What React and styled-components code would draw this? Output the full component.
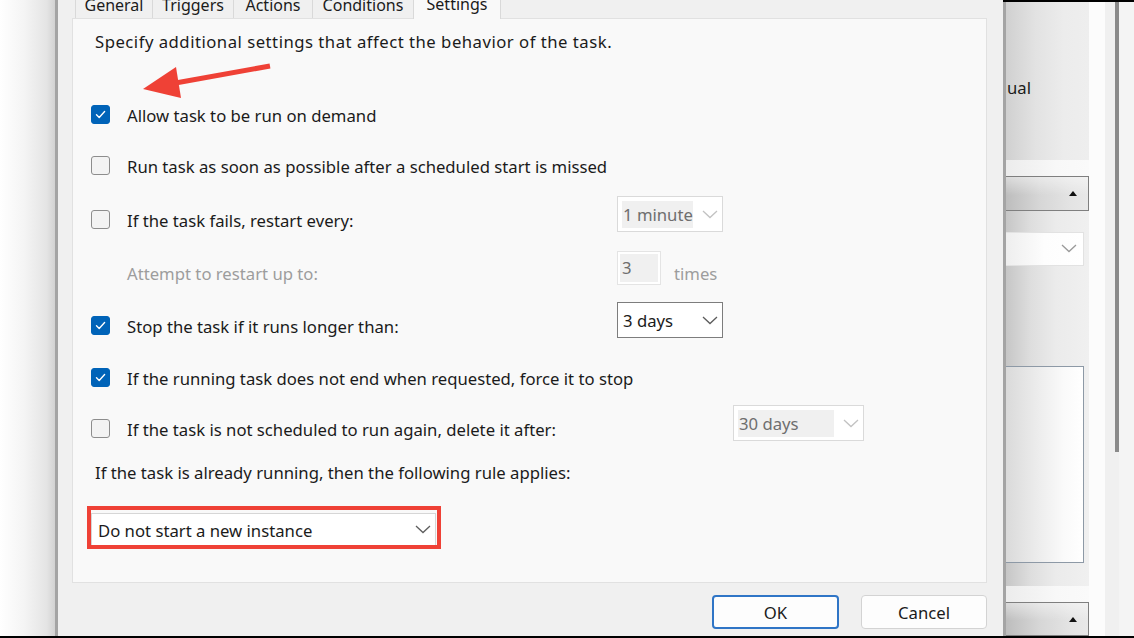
import React from 'react';
import styled, { createGlobalStyle } from 'styled-components';

const Global = createGlobalStyle`
  html, body { margin: 0; padding: 0; background: #000; overflow: hidden; }
  body { font-family: "Noto Sans", "Open Sans", sans-serif; color: #1b1b1b; }
  * { box-sizing: border-box; }
`;

const FS = '16.7px';

const Screen = styled.div`
  position: relative;
  width: 1134px;
  height: 638px;
  display: flex;
  flex-direction: column;
  background: #000;
  overflow: hidden;
`;

const Desk = styled.div`
  display: flex;
  height: 636px;
`;

const LeftShade = styled.div`
  width: 55px;
  background: linear-gradient(to right, #ffffff 0%, #f4f4f4 45%, #e4e4e4 85%, #d2d2d2 100%);
`;

const FrameEdge = styled.div`
  width: 3px;
  background: #a4a4a4;
`;

const Dialog = styled.div`
  width: 945px;
  background: #f0f0f0;
  display: flex;
  flex-direction: column;
  padding: 0 16px 0 14px;
  font-size: 16px;
`;

const TabStrip = styled.div`
  height: 18px;
  display: flex;
  align-items: flex-end;
  padding-left: 3px;
  position: relative;
  z-index: 1;
`;

const Tab = styled.div`
  width: ${p => p.$w}px;
  height: ${p => (p.$active ? 32 : 28)}px;
  margin-right: -1px;
  margin-bottom: ${p => (p.$active ? -1 : 0)}px;
  display: flex;
  align-items: center;
  justify-content: center;
  border: 1px solid #d9d9d9;
  border-bottom: none;
  background: ${p => (p.$active ? '#f9f9f9' : '#f0f0f0')};
  font-size: 16px;
  line-height: 22px;
  color: #1b1b1b;
  white-space: nowrap;
`;

const Panel = styled.div`
  height: 565px;
  border: 1px solid #e1e1e1;
  background: #f9f9f9;
  padding: 12px 20px 0 18px;
  display: flex;
  flex-direction: column;
`;

const Description = styled.div`
  margin-left: 4px;
  line-height: 22px;
  font-size: ${FS};
  letter-spacing: 0.5px;
  white-space: nowrap;
`;

const Row = styled.div`
  display: flex;
  align-items: flex-end;
  margin-top: ${p => p.$mt}px;
`;

const LabelGroup = styled.div`
  display: flex;
  align-items: center;
  height: 22px;
  width: ${p => (p.$w ? `${p.$w}px` : 'auto')};
  padding-left: ${p => p.$indent || 0}px;
  flex-shrink: 0;
`;

const Box = styled.span`
  width: 19px;
  height: 19px;
  margin-right: 17px;
  border-radius: 3px;
  flex-shrink: 0;
  display: flex;
  align-items: center;
  justify-content: center;
  background: ${p => (p.$on ? '#0063b8' : '#f3f3f3')};
  border: 1px solid ${p => (p.$on ? '#0063b8' : '#8d8d8d')};
  margin-top: -3px;
`;

const Label = styled.span`
  font-size: ${FS};
  line-height: 22px;
  white-space: nowrap;
  color: ${p => (p.$muted ? '#9d9d9d' : '#1b1b1b')};
`;

const Select = styled.div`
  width: ${p => p.$w}px;
  height: ${p => p.$h || 36}px;
  border: 1px solid ${p => (p.$disabled ? '#dadada' : '#7d7d7d')};
  background: #fff;
  display: flex;
  align-items: center;
  padding: 0 4px;
  flex-shrink: 0;
`;

const SelectValue = styled.span`
  flex: 1;
  height: 27px;
  line-height: 27px;
  padding-left: 1px;
  font-size: ${FS};
  white-space: nowrap;
  background: ${p => (p.$disabled ? '#f0f0f0' : 'transparent')};
  color: ${p => (p.$disabled ? '#6e6e6e' : '#1b1b1b')};
`;

const ChevronWrap = styled.span`
  width: 16px;
  margin-left: 9px;
  display: flex;
  align-items: center;
`;

const NumberBox = styled.div`
  width: 44px;
  height: 34px;
  border: 1px solid #e4e4e4;
  background: #fff;
  padding: 2px;
  flex-shrink: 0;
`;

const NumberFill = styled.div`
  height: 100%;
  background: #f0f0f0;
  color: #6e6e6e;
  font-size: ${FS};
  line-height: 28px;
  padding-left: 2px;
`;

const Suffix = styled.span`
  margin-left: 13px;
  line-height: 22px;
  font-size: ${FS};
  color: #9d9d9d;
`;

const RuleLabel = styled.div`
  margin-top: 21px;
  margin-left: 4px;
  line-height: 22px;
  font-size: ${FS};
  white-space: nowrap;
`;

const HighlightWrap = styled.div`
  position: relative;
  margin-top: 29px;
  width: 345px;
`;

const Highlight = styled.div`
  position: absolute;
  left: -4px;
  top: -7px;
  right: -5px;
  bottom: -3px;
  border: 4px solid #ef4136;
  pointer-events: none;
`;

const MainSelect = styled.div`
  height: 33px;
  border: 1px solid #d6d6d6;
  background: #fff;
  display: flex;
  align-items: center;
  padding: 0 4px 0 6px;
  font-size: ${FS};
`;

const MainValue = styled.span`
  flex: 1;
  line-height: 22px;
  padding-top: 2px;
`;

const Footer = styled.div`
  display: flex;
  justify-content: flex-end;
  gap: 22px;
  padding-top: 12px;
`;

const Button = styled.button`
  width: ${p => p.$w}px;
  height: 34px;
  border-radius: 4px;
  font-family: inherit;
  font-size: ${FS};
  color: #1b1b1b;
  background: #fdfdfd;
  border: ${p => (p.$primary ? '2px solid #2f75c6' : '1px solid #d3d3d3')};
  padding: 0;
`;

const RightSide = styled.div`
  flex: 1;
  display: flex;
  border-top: 2px solid #000;
`;

const BackWindow = styled.div`
  width: 83px;
  display: flex;
  flex-direction: column;
`;

const TopGray = styled.div`
  height: 158px;
  padding-top: 75px;
  padding-left: 1px;
  background: linear-gradient(to right, #d0d0d0 0%, #e2e2e2 35%, #ececec 70%, #eeeeee 100%);
  font-size: ${FS};
  line-height: 22px;
  color: #1b1b1b;
`;

const Band = styled.div`
  height: ${p => p.$h}px;
  background: linear-gradient(to right, #ececec, #f8f8f8 60%, #fafafa);
`;

const Bar = styled.div`
  height: ${p => p.$h}px;
  border: 1px solid #7f7f7f;
  border-left: none;
  background:
    linear-gradient(to bottom, rgba(255,255,255,0.45), rgba(255,255,255,0) 55%),
    linear-gradient(to right, #bdbdbd 0%, #d6d6d6 40%, #e4e4e4 80%, #e8e8e8 100%);
  display: flex;
  align-items: center;
  justify-content: flex-end;
  padding-right: 11px;
`;

const UpTri = styled.span`
  width: 0;
  height: 0;
  border-left: 4px solid transparent;
  border-right: 4px solid transparent;
  border-bottom: 5px solid #111;
`;

const MidPanel = styled.div`
  height: 376px;
  padding: 21px 5px 0 0;
  background: linear-gradient(to right, #c6c6c6 0%, #dedede 30%, #ebebeb 60%, #f0f0f0 100%);
  display: flex;
  flex-direction: column;
`;

const Combo = styled.div`
  height: 34px;
  background: linear-gradient(to right, #eeeeee, #fdfdfd 50%, #ffffff);
  border: 1px solid #e2e2e2;
  border-left: none;
  display: flex;
  align-items: center;
  justify-content: flex-end;
  padding-right: 6px;
`;

const ListBox = styled.div`
  margin-top: 100px;
  height: 197px;
  border: 1px solid #8d99a6;
  border-left: none;
  background: linear-gradient(to right, #dadada 0%, #eeeeee 45%, #fafafa 75%, #ffffff 100%);
`;

const WhiteStrip = styled.div`
  width: 16px;
  background: #fcfcfc;
`;

const ScrollTrack = styled.div`
  flex: 1;
  display: flex;
  background: #f0f0f0;
  padding-left: 10px;
`;

const Thumb = styled.div`
  width: 4px;
  height: 450px;
  background: #8a8a8a;
`;

const ScrollRest = styled.div`
  flex: 1;
  background: #f4f4f4;
`;

const BottomLine = styled.div`
  height: 2px;
  background: #000;
`;

const ArrowSvg = styled.svg`
  position: absolute;
  left: 0;
  top: 0;
  pointer-events: none;
`;

const Chevron = ({ color }) => (
  <svg width="16" height="9" viewBox="0 0 16 9">
    <polyline points="1,1 8,7.5 15,1" fill="none" stroke={color} strokeWidth="1.3" />
  </svg>
);

const Check = ({ on }) => (
  <Box $on={on}>
    {on && (
      <svg width="13" height="13" viewBox="0 0 13 13">
        <polyline points="2.5,6.8 5.2,9.4 10.6,3.6" fill="none" stroke="#fff" strokeWidth="1.4" strokeLinecap="round" strokeLinejoin="round" />
      </svg>
    )}
  </Box>
);

const Dropdown = ({ w, value, disabled }) => (
  <Select $w={w} $disabled={disabled}>
    <SelectValue $disabled={disabled}>{value}</SelectValue>
    <ChevronWrap>
      <Chevron color={disabled ? '#c2c2c2' : '#5c5c5c'} />
    </ChevronWrap>
  </Select>
);

const tabs = [
  { name: 'General', w: 78 },
  { name: 'Triggers', w: 82 },
  { name: 'Actions', w: 80 },
  { name: 'Conditions', w: 102 },
  { name: 'Settings', w: 88, active: true },
];

export default function App() {
  return (
    <Screen>
      <Global />
      <Desk>
        <LeftShade />
        <FrameEdge />
        <Dialog>
          <TabStrip>
            {tabs.map(t => (
              <Tab key={t.name} $w={t.w} $active={t.active}>{t.name}</Tab>
            ))}
          </TabStrip>
          <Panel>
            <Description>Specify additional settings that affect the behavior of the task.</Description>

            <Row $mt={52}>
              <LabelGroup><Check on /><Label>Allow task to be run on demand</Label></LabelGroup>
            </Row>

            <Row $mt={29}>
              <LabelGroup><Check /><Label>Run task as soon as possible after a scheduled start is missed</Label></LabelGroup>
            </Row>

            <Row $mt={18}>
              <LabelGroup $w={526}><Check /><Label>If the task fails, restart every:</Label></LabelGroup>
              <Dropdown w={106} value="1 minute" disabled />
            </Row>

            <Row $mt={19}>
              <LabelGroup $w={526} $indent={36}><Label $muted>Attempt to restart up to:</Label></LabelGroup>
              <NumberBox><NumberFill>3</NumberFill></NumberBox>
              <Suffix>times</Suffix>
            </Row>

            <Row $mt={17}>
              <LabelGroup $w={526}><Check on /><Label>Stop the task if it runs longer than:</Label></LabelGroup>
              <Dropdown w={106} value="3 days" />
            </Row>

            <Row $mt={30}>
              <LabelGroup><Check on /><Label>If the running task does not end when requested, force it to stop</Label></LabelGroup>
            </Row>

            <Row $mt={15}>
              <LabelGroup $w={642}><Check /><Label>If the task is not scheduled to run again, delete it after:</Label></LabelGroup>
              <Dropdown w={131} value="30 days" disabled />
            </Row>

            <RuleLabel>If the task is already running, then the following rule applies:</RuleLabel>

            <HighlightWrap>
              <MainSelect>
                <MainValue>Do not start a new instance</MainValue>
                <Chevron color="#5e5e5e" />
              </MainSelect>
              <Highlight />
            </HighlightWrap>
          </Panel>
          <Footer>
            <Button $w={127} $primary>OK</Button>
            <Button $w={126}>Cancel</Button>
          </Footer>
        </Dialog>
        <RightSide>
          <FrameEdge />
          <BackWindow>
            <TopGray>ual</TopGray>
            <Band $h={16} />
            <Bar $h={35}><UpTri /></Bar>
            <MidPanel>
              <Combo><Chevron color="#9a9a9a" /></Combo>
              <ListBox />
            </MidPanel>
            <Band $h={16} />
            <Bar $h={34}><UpTri /></Bar>
          </BackWindow>
          <WhiteStrip />
          <ScrollTrack>
            <Thumb />
            <ScrollRest />
          </ScrollTrack>
        </RightSide>
      </Desk>
      <BottomLine />
      <ArrowSvg width="1134" height="638" viewBox="0 0 1134 638">
        <line x1="270" y1="66" x2="170" y2="84" stroke="#ef4136" strokeWidth="5" />
        <polygon points="143,89 176,67 181,98" fill="#ef4136" />
      </ArrowSvg>
    </Screen>
  );
}
